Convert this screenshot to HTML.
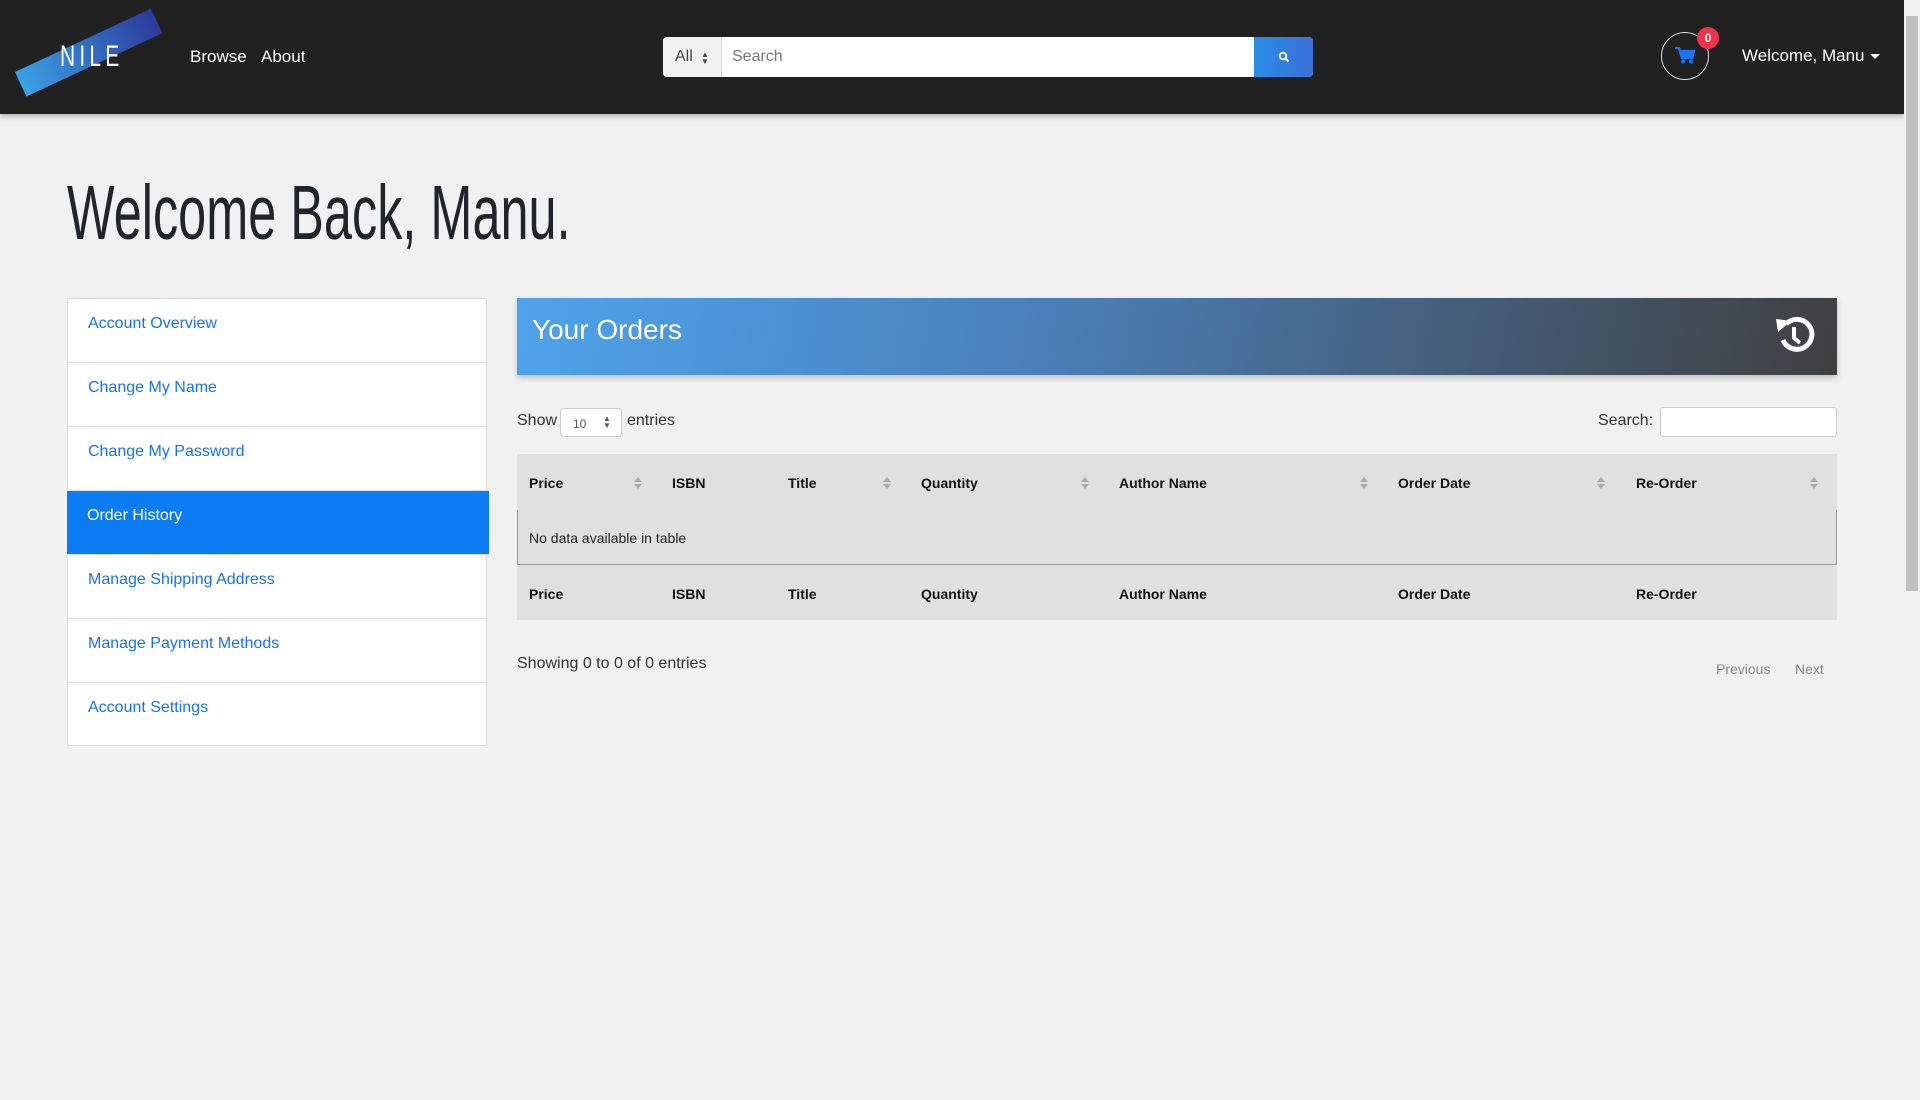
<!DOCTYPE html>
<html><head><meta charset="utf-8"><style>
*{box-sizing:border-box;margin:0;padding:0}
body{width:1920px;height:1100px;background:#f1f1f1;font-family:"Liberation Sans",sans-serif;position:relative;overflow:hidden}
.abs{position:absolute}
nav{position:absolute;left:0;top:0;width:1904px;height:114px;background:#212121;box-shadow:0 2px 6px rgba(0,0,0,.3)}
.nl{color:#fff;font-size:17px;top:47px}
.side{left:67px;top:298px;width:420px;height:448px;background:#fff;border:1px solid #ddd}
.item{position:absolute;left:0;width:420px;height:64px;border-bottom:1px solid #ddd;color:#1a73e8;font-size:16px;padding:16px 0 0 20px}
.th{font-size:14px;font-weight:bold;color:#111;position:absolute}
.sort{position:absolute;width:0;height:0;border-left:4px solid transparent;border-right:4px solid transparent}
</style></head><body>
<nav>
 <div class="abs" style="left:15px;top:72px;width:150px;height:27px;background:linear-gradient(90deg,#3aa2e6,#2d3a9c);transform:rotate(-25deg);transform-origin:left top"></div>
 <div class="abs" style="left:60px;top:40px;color:#fff;font-size:30px;letter-spacing:6px;transform:scaleX(.7);transform-origin:left">NILE</div>
 <div class="abs nl" style="left:190px">Browse</div>
 <div class="abs nl" style="left:261px">About</div>
 <div class="abs" style="left:663px;top:37px;width:650px;height:40px;background:#fff;border-radius:4px;overflow:hidden">
  <div class="abs" style="left:0;top:0;width:59px;height:40px;background:#f1f1f1;border-right:1px solid #ddd;font-size:16px;color:#444;padding:11px 0 0 12px">All</div>
  <div class="abs" style="left:38px;top:14px;font-size:8px;line-height:7px;color:#444">&#x25B2;<br>&#x25BC;</div>
  <div class="abs" style="left:69px;top:11px;font-size:16px;color:#777">Search</div>
  <div class="abs" style="right:0;top:0;width:59px;height:40px;background:linear-gradient(90deg,#2a8de6,#3a6fd8)"><svg class="abs" style="left:24px;top:14px" width="12" height="12" viewBox="0 0 12 12"><circle cx="5" cy="5" r="3.3" fill="none" stroke="#fff" stroke-width="1.8"/><path d="M7.5 7.5L10.5 10.5" stroke="#fff" stroke-width="2"/></svg></div>
 </div>
 <div class="abs" style="left:1661px;top:32px;width:48px;height:48px;border:1.5px solid #ddd;border-radius:50%"></div>
 <svg class="abs" style="left:1675px;top:47px" width="20" height="17" viewBox="0 0 20 17"><path d="M0 1h4l3 10h10l2-7H6" fill="none" stroke="#1a73f0" stroke-width="2.5"/><rect x="6" y="4" width="12" height="6" fill="#1a73f0"/><circle cx="8" cy="14.5" r="2" fill="#1a73f0"/><circle cx="16" cy="14.5" r="2" fill="#1a73f0"/></svg>
 <div class="abs" style="left:1697px;top:27px;width:22px;height:22px;border-radius:50%;background:#f0334a;color:#fff;font-size:12px;font-weight:bold;text-align:center;line-height:22px">0</div>
 <div class="abs nl" style="left:1742px;top:46px">Welcome, Manu</div>
 <div class="abs" style="left:1870px;top:54px;border-left:5px solid transparent;border-right:5px solid transparent;border-top:5px solid #fff"></div>
</nav>
<div class="abs" style="left:1904px;top:0;width:16px;height:1100px;background:#f1f1f1"><div class="abs" style="left:2px;top:16px;width:12px;height:575px;background:#c1c1c1"></div></div>
<div class="abs" style="left:67px;top:168px;font-size:77px;color:#212529;white-space:nowrap;transform:scaleX(.655);transform-origin:left top;line-height:90px">Welcome Back, Manu.</div>
<div class="abs side">
 <div class="item" style="top:0">Account Overview</div>
 <div class="item" style="top:64px">Change My Name</div>
 <div class="item" style="top:128px">Change My Password</div>
 <div class="item" style="top:192px;background:#0b7cf4;color:#fff;left:-1px;width:422px">Order History</div>
 <div class="item" style="top:256px">Manage Shipping Address</div>
 <div class="item" style="top:320px">Manage Payment Methods</div>
 <div class="item" style="top:384px;border:none">Account Settings</div>
</div>
<div class="abs" style="left:517px;top:298px;width:1320px;height:77px;background:linear-gradient(100deg,#4fa3ec 0%,#4a80b8 40%,#445a72 75%,#404040 100%);box-shadow:0 3px 6px rgba(0,0,0,.2)">
 <div class="abs" style="left:15px;top:16px;color:#fff;font-size:28px">Your Orders</div>
 <svg class="abs" style="left:1252px;top:12px" width="52" height="52" viewBox="0 0 52 52"><path d="M14 30A15 15 0 1 0 17 14" fill="none" stroke="#fff" stroke-width="5"/><path d="M7 9L22 11L9 22Z" fill="#fff"/><path d="M25 17v11l6 5" fill="none" stroke="#fff" stroke-width="4"/></svg>
</div>
<div class="abs" style="left:517px;top:412px;font-size:16px;color:#333">Show</div>
<div class="abs" style="left:560px;top:408px;width:62px;height:29px;background:#fff;border:1px solid #ccc;border-radius:4px;font-size:12px;color:#555;padding:8px 0 0 12px">10<span class="abs" style="left:42px;top:6px;font-size:8px;line-height:7px">&#x25B2;<br>&#x25BC;</span></div>
<div class="abs" style="left:627px;top:412px;font-size:16px;color:#333">entries</div>
<div class="abs" style="left:1598px;top:412px;font-size:16px;color:#333">Search:</div>
<div class="abs" style="left:1660px;top:407px;width:177px;height:30px;background:#fff;border:1px solid #ccc;border-radius:3px"></div>
<div class="abs" style="left:517px;top:454px;width:1320px;height:56px;background:#e0e0e0"></div>
<div class="abs" style="left:517px;top:510px;width:1320px;height:55px;background:#e0e0e0;border-left:1px solid #999;border-right:1px solid #999;border-bottom:1px solid #999"></div>
<div class="abs" style="left:517px;top:565px;width:1320px;height:55px;background:#e0e0e0"></div>
<div class="abs" style="left:529px;top:530px;font-size:14px;color:#222">No data available in table</div>
<div class="th" style="left:529px;top:475px">Price</div><div class="th" style="left:672px;top:475px">ISBN</div><div class="th" style="left:788px;top:475px">Title</div><div class="th" style="left:921px;top:475px">Quantity</div><div class="th" style="left:1119px;top:475px">Author Name</div><div class="th" style="left:1398px;top:475px">Order Date</div><div class="th" style="left:1636px;top:475px">Re-Order</div>
<div class="th" style="left:529px;top:586px">Price</div><div class="th" style="left:672px;top:586px">ISBN</div><div class="th" style="left:788px;top:586px">Title</div><div class="th" style="left:921px;top:586px">Quantity</div><div class="th" style="left:1119px;top:586px">Author Name</div><div class="th" style="left:1398px;top:586px">Order Date</div><div class="th" style="left:1636px;top:586px">Re-Order</div>
<div style="position:absolute;top:477px;left:0">
<div class="sort" style="left:634px;top:0;border-bottom:5px solid #aaa"></div><div class="sort" style="left:634px;top:7px;border-top:5px solid #aaa"></div>
<div class="sort" style="left:883px;top:0;border-bottom:5px solid #aaa"></div><div class="sort" style="left:883px;top:7px;border-top:5px solid #aaa"></div>
<div class="sort" style="left:1081px;top:0;border-bottom:5px solid #aaa"></div><div class="sort" style="left:1081px;top:7px;border-top:5px solid #aaa"></div>
<div class="sort" style="left:1360px;top:0;border-bottom:5px solid #aaa"></div><div class="sort" style="left:1360px;top:7px;border-top:5px solid #aaa"></div>
<div class="sort" style="left:1597px;top:0;border-bottom:5px solid #aaa"></div><div class="sort" style="left:1597px;top:7px;border-top:5px solid #aaa"></div>
<div class="sort" style="left:1810px;top:0;border-bottom:5px solid #aaa"></div><div class="sort" style="left:1810px;top:7px;border-top:5px solid #aaa"></div>
</div>
<div class="abs" style="left:517px;top:655px;font-size:16px;color:#333">Showing 0 to 0 of 0 entries</div>
<div class="abs" style="left:1716px;top:661px;font-size:14px;color:#888">Previous</div>
<div class="abs" style="left:1795px;top:661px;font-size:14px;color:#888">Next</div>
</body></html>
